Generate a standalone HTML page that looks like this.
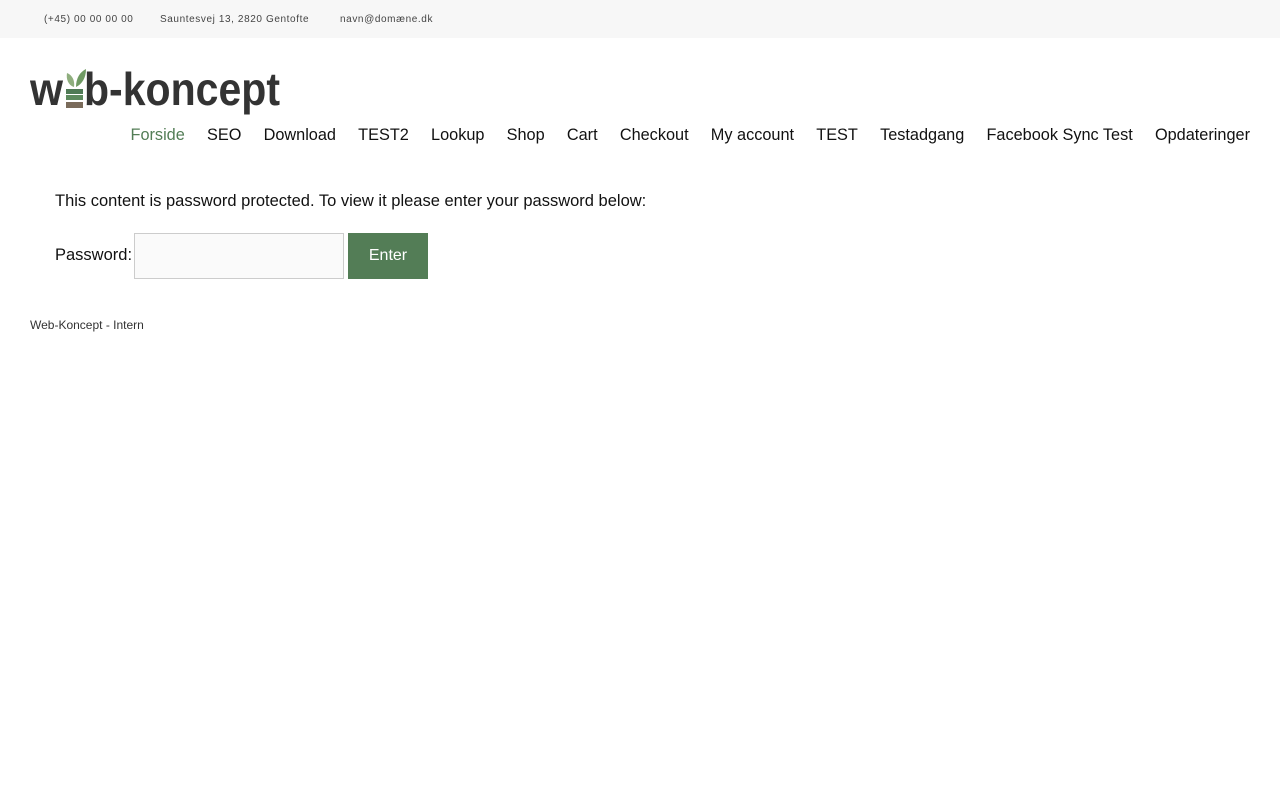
<!DOCTYPE html>
<html><head><meta charset="utf-8"><style>
*{margin:0;padding:0;box-sizing:border-box}
body{width:1280px;height:800px;background:#fff;font-family:"Liberation Sans",sans-serif;color:#111;position:relative}
.top{height:38px;background:#f7f7f7;font-size:10px;color:#444;letter-spacing:.6px}
.top span{position:absolute;top:14px}
nav{position:absolute;top:126px;right:30px;font-size:16.3px;display:flex;gap:22.2px;white-space:nowrap}
nav a{color:#111;text-decoration:none}
.p1{position:absolute;left:55px;top:192px;font-size:16.5px}
.pw{position:absolute;left:55px;top:246px;font-size:16.5px}
.inp{position:absolute;left:134px;top:233px;width:210px;height:46px;border:1px solid #ccc;background:#fafafa}
.btn{position:absolute;left:348px;top:233px;width:80px;height:46px;background:#537d56;color:#fff;font-size:16px;text-align:center;line-height:46px}
.foot{position:absolute;left:30px;top:318px;font-size:12px;color:#333}
</style></head><body>
<div class="top"><span style="left:44px">(+45) 00 00 00 00</span><span style="left:160px">Sauntesvej 13, 2820 Gentofte</span><span style="left:340px">navn@domæne.dk</span></div>
<svg style="position:absolute;left:30px;top:64px" width="252" height="54" viewBox="0 0 252 54">
<text x="0" y="41" font-family="Liberation Sans" font-weight="bold" font-size="46" fill="#333" textLength="33" lengthAdjust="spacingAndGlyphs">w</text>
<path d="M44 23 C38 21 36 15 37 9 C42 11 45 16 44 23Z" fill="#8fae7e"/>
<path d="M46 23 C46 14 50 8 56 5 C56 14 52 20 46 23Z" fill="#6f9a63"/>
<rect x="36" y="25" width="17" height="5" fill="#4f7a55"/>
<rect x="36" y="31" width="17" height="5" fill="#5d8a5e"/>
<rect x="36" y="38" width="17" height="6" fill="#7a6b5a"/>
<text x="54" y="41" font-family="Liberation Sans" font-weight="bold" font-size="46" fill="#333" textLength="196" lengthAdjust="spacingAndGlyphs">b-koncept</text>
</svg>
<nav><a style="color:#537d56">Forside</a><a>SEO</a><a>Download</a><a>TEST2</a><a>Lookup</a><a>Shop</a><a>Cart</a><a>Checkout</a><a>My account</a><a>TEST</a><a>Testadgang</a><a>Facebook Sync Test</a><a>Opdateringer</a></nav>
<div class="p1">This content is password protected. To view it please enter your password below:</div>
<div class="pw">Password:</div><div class="inp"></div><div class="btn">Enter</div>
<div class="foot">Web-Koncept - Intern</div>
</body></html>
